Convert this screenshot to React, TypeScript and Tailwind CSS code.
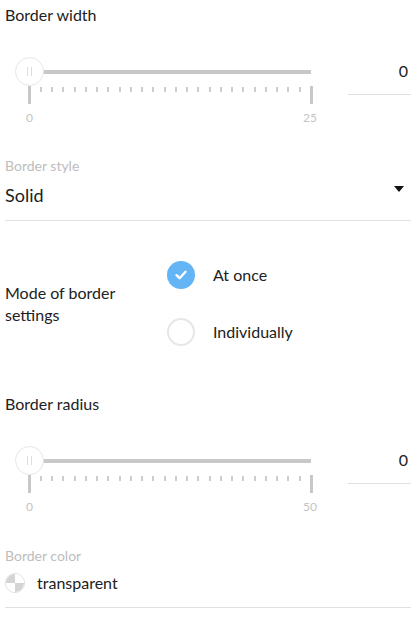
import React from "react";

const font = { fontFamily: "Lato, 'Open Sans', sans-serif" };

function Slider({ max }: { max: number }) {
  const ticks = Array.from({ length: 26 }, (_, i) => i);
  return (
    <div className="flex flex-row items-start">
      <div className="relative ml-[10px] h-[70px] w-[300px]">
        <div className="absolute left-[14px] top-[14px] h-[4px] w-[282px] bg-[#c8c8c8]" />
        {ticks.map((i) => {
          const end = i === 0 || i === 25;
          const x = 14.5 + i * 11.26;
          return end ? (
            <div
              key={i}
              className="absolute top-[30px] h-[18px] w-[3px] bg-[#c8c8c8]"
              style={{ left: x - 1.5 }}
            />
          ) : (
            <div
              key={i}
              className="absolute top-[31px] h-[5px] w-[2px] bg-[#cccccc]"
              style={{ left: x - 1 }}
            />
          );
        })}
        <div className="absolute left-0 top-[1px] flex h-[29px] w-[29px] items-center justify-center gap-[3px] rounded-full border border-[#e6e6e6] bg-white">
          <div className="h-[9px] w-px bg-[#dddddd]" />
          <div className="h-[9px] w-px bg-[#dddddd]" />
        </div>
        <div className="absolute left-[4.5px] top-[55px] w-[20px] text-center text-[12px] leading-[14px] text-[#c4c4c4]">
          0
        </div>
        <div className="absolute left-[280px] top-[55px] w-[30px] text-center text-[12px] leading-[14px] text-[#c4c4c4]">
          {max}
        </div>
      </div>
      <div className="ml-auto box-border h-[39px] w-[63px] border-b border-[#e0e0e0] pr-[3px] pt-[5px] text-right text-[16px] leading-[20px] text-[#212121]">
        0
      </div>
    </div>
  );
}

function Radio({ checked, label }: { checked: boolean; label: string }) {
  return (
    <div className="flex h-[28px] flex-row items-center">
      {checked ? (
        <div className="flex h-[28px] w-[28px] items-center justify-center rounded-full bg-[#64b5f6]">
          <svg width="14" height="14" viewBox="0 0 14 14">
            <path
              d="M2.5 7.2 L5.6 10.2 L11.5 3.8"
              fill="none"
              stroke="white"
              strokeWidth="2.4"
              strokeLinecap="round"
              strokeLinejoin="round"
            />
          </svg>
        </div>
      ) : (
        <div className="box-border h-[28px] w-[28px] rounded-full border-2 border-[#e6e6e6] bg-white" />
      )}
      <span className="ml-[18px] text-[16px] leading-[20px] text-[#212121]">{label}</span>
    </div>
  );
}

export default function App() {
  return (
    <div className="flex w-[416px] flex-col bg-white px-[5px]" style={font}>
      <div className="mt-[5px] text-[16px] leading-[20px] text-[#212121]">Border width</div>
      <div className="mt-[31px]">
        <Slider max={25} />
      </div>

      <div className="mt-[31px] text-[14px] leading-[18px] text-[#bdbdbd]">Border style</div>
      <div className="mt-[8px] flex flex-row items-start border-b border-[#e0e0e0] pb-[13px]">
        <span className="text-[18px] leading-[24px] text-[#212121]">Solid</span>
        <svg className="ml-auto mr-[7px] mt-[3px]" width="10" height="6" viewBox="0 0 10 6">
          <path d="M0 0 L10 0 L5 6 Z" fill="#111" />
        </svg>
      </div>

      <div className="mt-[40px] flex flex-row items-center">
        <div className="w-[162px]">
          <div className="w-[130px] text-[16px] leading-[22px] text-[#212121]">Mode of border settings</div>
        </div>
        <div className="flex flex-col gap-[29px]">
          <Radio checked label="At once" />
          <Radio checked={false} label="Individually" />
        </div>
      </div>

      <div className="mt-[48px] text-[16px] leading-[20px] text-[#212121]">Border radius</div>
      <div className="mt-[31px]">
        <Slider max={50} />
      </div>

      <div className="mt-[32px] text-[14px] leading-[18px] text-[#bdbdbd]">Border color</div>
      <div className="mt-[8px] flex flex-row items-center border-b border-[#e0e0e0] pb-[14px]">
        <div className="relative h-[20px] w-[20px] overflow-hidden rounded-full border border-[#e0e0e0]">
          <div className="grid h-full w-full grid-cols-2 grid-rows-2">
            <div className="bg-[#d4d4d4]" />
            <div className="bg-white" />
            <div className="bg-white" />
            <div className="bg-[#d4d4d4]" />
          </div>
        </div>
        <span className="ml-[12px] text-[16px] leading-[20px] text-[#212121]">transparent</span>
      </div>
    </div>
  );
}
